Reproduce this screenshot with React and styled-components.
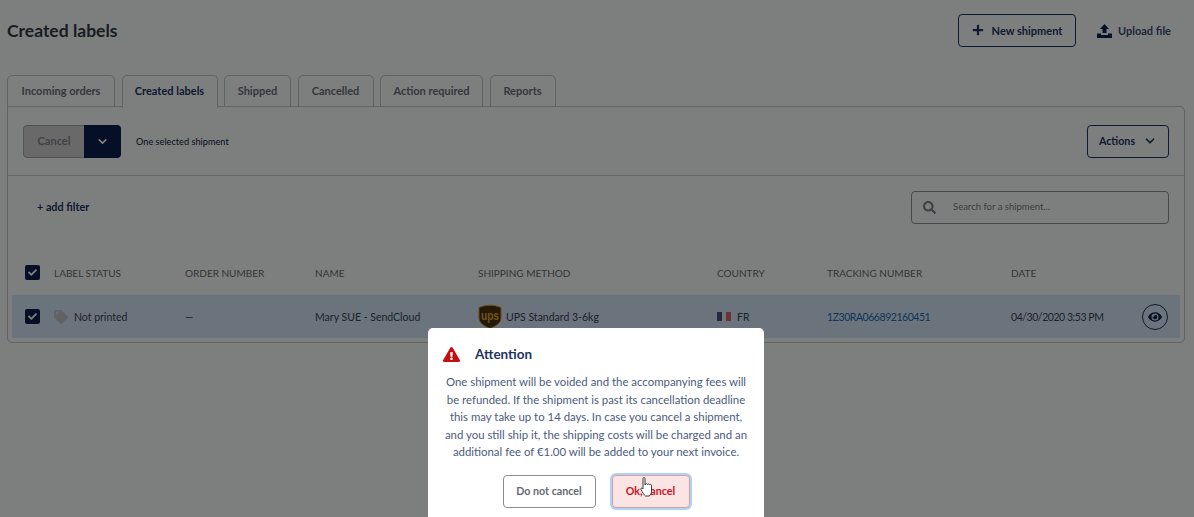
import React from "react";
import styled, { createGlobalStyle } from "styled-components";
import { FaPlus, FaTag, FaEye, FaSearch, FaExclamationTriangle, FaCheck } from "react-icons/fa";
import { ChevronDown } from "lucide-react";

const Global = createGlobalStyle`
  html, body { margin: 0; padding: 0; background: #fafeff; }
  body { font-family: "Lato", "Noto Sans", sans-serif; color: #1e2f55; }
  * { box-sizing: border-box; }
`;
const Page = styled.div`
  position: relative; width: 1194px; height: 517px; overflow: hidden;
  padding: 0 9px 0 7px;
`;
const Header = styled.header`
  display: flex; align-items: center; height: 61px; padding: 0 14px 0 0;
`;
const Title = styled.h1`
  margin: 0; flex: 1; font-size: 17.5px; font-weight: 700; color: #333a44;
`;
const OutlineButton = styled.button`
  display: inline-flex; align-items: center; justify-content: center; gap: ${p => p.$gap || 8}px;
  width: ${p => p.$w}px; height: ${p => p.$h || 33}px; border: 1.5px solid #1e3460; border-radius: 4px;
  background: transparent; color: #1e3460; font: 700 ${p => p.$size || 11}px "Lato", sans-serif; padding: 0 0 1px;
`;
const UploadButton = styled.div`
  display: flex; align-items: center; gap: 6px; margin-left: 21px; font-size: 11px; font-weight: 700; color: #3f4f72;
`;
const Tabs = styled.nav`
  display: flex; gap: 6.5px; height: 32px; margin-top: 14px; position: relative;
`;
const Tab = styled.div`
  width: ${p => p.$w}px; height: ${p => p.$active ? 33 : 32}px; display: flex; align-items: center; justify-content: center;
  padding-bottom: ${p => p.$active ? 3 : 1}px;
  border: 1px solid #c4c6c8; border-bottom: ${p => p.$active ? "none" : "1px solid #c4c6c8"};
  border-radius: 5px 5px 0 0; background: ${p => p.$active ? "#fafeff" : "transparent"};
  font-size: 11px; font-weight: 700; color: ${p => p.$active ? "#1e3460" : "#6a6f78"};
`;
const Panel = styled.section`
  width: 1178px; height: 237px; margin-top: -1px; border: 1px solid #c4c6c8; border-radius: 0 5px 5px 5px;
`;
const Toolbar = styled.div`
  height: 69px; display: flex; align-items: center; padding: 0 15px; border-bottom: 1px solid #c8cacc;
`;
const Split = styled.div`
  display: flex; width: 98px; height: 33px; border-radius: 4px; overflow: hidden;
`;
const SplitMain = styled.div`
  width: 61px; display: flex; align-items: center; justify-content: center; padding-bottom: 1px;
  background: #d2d3d4; border: 1.5px solid #a6a8aa; border-right: none; border-radius: 4px 0 0 4px;
  color: #80848a; font-size: 11px; font-weight: 700;
`;
const SplitArrow = styled.div`
  flex: 1; display: flex; align-items: center; justify-content: center; background: #0b1f4b; color: #fff;
`;
const Selected = styled.span`
  margin-left: 15px; flex: 1; font-size: 9.2px; color: #0c1a38;
`;
const FilterBar = styled.div`
  height: 60px; display: flex; align-items: center; justify-content: space-between; padding: 2px 15px 0 30px;
`;
const AddFilter = styled.span`
  font-size: 10.8px; font-weight: 700; color: #1e3460; margin: 0 0 2px -1px;
`;
const Search = styled.div`
  width: 258px; height: 33px; display: flex; align-items: center; gap: 17px; padding-left: 11px;
  border: 1px solid #8f9196; border-radius: 4px; color: #7d8086;
`;
const SearchText = styled.span`
  font-size: 9.5px; color: #7a7d82; margin-bottom: 1px;
`;
const Grid = styled.div`
  display: grid; grid-template-columns: 42px 131px 130px 163px 239px 110px 184px 131px 1fr;
  align-items: center; margin: 0 4px; height: ${p => p.$h}px; padding-top: ${p => p.$top || 0}px;
  background: ${p => p.$selected ? "#d6e8fa" : "transparent"};
`;
const HeadCell = styled.span`
  font-size: 10px; color: #6a6a6a;
`;
const Cell = styled.span`
  display: flex; align-items: center; font-size: 10.5px; color: ${p => p.$link ? "#2768b4" : "#3a4356"};
  letter-spacing: ${p => p.$tight ? "-.45px" : "0"};
`;
const Check = styled.span`
  justify-self: start; margin-left: 13px; width: 15px; height: 15px; border-radius: 2px; background: #0b1f4b; color: #fff;
  display: flex; align-items: center; justify-content: center;
`;
const TagWrap = styled.span`
  display: inline-flex; color: #c2c4c8; margin-right: 6px;
`;
const EyeButton = styled.span`
  width: 26px; height: 26px; border: 1.5px solid #1e3460; border-radius: 50%; display: flex; align-items: center; justify-content: center; color: #0f2550;
`;
const Overlay = styled.div`
  position: absolute; inset: 0; z-index: 2; background: rgba(0,0,0,.5);
`;
const Modal = styled.div`
  position: absolute; z-index: 3; left: 428px; top: 328px; width: 336px; height: 210px; background: #fff; border-radius: 5px; padding: 15px 15px 0;
`;
const ModalHead = styled.div`
  display: flex; align-items: center; gap: 15px; height: 22px; color: #c40f12;
`;
const ModalTitle = styled.h2`
  margin: 0; font-size: 13.5px; font-weight: 700; color: #1e3460;
`;
const ModalText = styled.p`
  margin: 8px 0 0; font-size: 11.4px; line-height: 17.5px; text-align: center; color: #4a5c80;
`;
const ModalButtons = styled.div`
  display: flex; justify-content: center; gap: 16px; margin-top: 14px;
`;
const Ghost = styled.button`
  width: 93px; height: 33px; background: #fff; border: 1px solid #8b8b8b; border-radius: 4px; color: #666a70; font: 700 10.7px "Lato", sans-serif; padding: 0 0 1px;
`;
const Danger = styled.button`
  width: 78px; height: 33px; background: #fbe4e4; border: 1px solid #e29b9d; border-radius: 4px; color: #c8141e; font: 700 10.7px "Lato", sans-serif; padding: 0 0 1px;
  box-shadow: 0 0 0 2px #a9d5f7;
`;
const Cursor = styled.svg`
  position: absolute; z-index: 4; left: 640px; top: 477px;
`;

const UpsLogo = () => (
  <svg width="24" height="25" viewBox="0 0 24 25" style={{ marginRight: 4 }}>
    <path d="M1 3.500C8 .5 16 .5 23 3.500V14c0 5-5 8-11 10.500C6 22 1 19 1 14Z" fill="#4a3414" stroke="#d49a28" strokeWidth="1" />
    <text x="12" y="15.500" textAnchor="middle" textLength="18" lengthAdjust="spacingAndGlyphs" fontFamily="Liberation Sans, sans-serif" fontWeight="700" fontSize="12" fill="#e6ab2c">ups</text>
  </svg>
);
const Flag = () => (
  <svg width="14" height="9" viewBox="0 0 14 9" style={{ marginRight: 6 }}>
    <rect width="5" height="9" fill="#46567f" /><rect x="5" width="4" height="9" fill="#e8e8ee" /><rect x="9" width="5" height="9" fill="#d6666a" />
  </svg>
);
const UploadIcon = () => (
  <svg width="15" height="14" viewBox="0 0 15 14">
    <path d="M7.500 0 12 5H9.500v4h-4V5H3Z" fill="#0f2550" />
    <path d="M0 9.500h4V11h7V9.500h4V14H0Z" fill="#0f2550" />
  </svg>
);
const Hand = () => (
  <Cursor width="13" height="20" viewBox="0 0 13 20">
    <path d="M3 1.500c0-1.300 2-1.300 2 0V8l.500-.500c.300-1 1.700-1 2 0 .300-.800 1.700-.800 2 .200.500-.500 1.800-.300 2 .600V14c0 2.500-1 4.500-2.500 5H5.500C4 18 2.500 15.500 1 12.500c-.500-1 .600-2 1.500-1L3 12Z" fill="#fff" stroke="#222" strokeWidth=".9" />
  </Cursor>
);

const tabs = [["Incoming orders", 108], ["Created labels", 96, true], ["Shipped", 67], ["Cancelled", 76], ["Action required", 103], ["Reports", 66]];
const heads = ["LABEL STATUS", "ORDER NUMBER", "NAME", "SHIPPING METHOD", "COUNTRY", "TRACKING NUMBER", "DATE"];

export default function App() {
  return (
    <Page>
      <Global />
      <Header>
        <Title>Created labels</Title>
        <OutlineButton $w={118}><FaPlus size={12} />New shipment</OutlineButton>
        <UploadButton><UploadIcon />Upload file</UploadButton>
      </Header>
      <Tabs>
        {tabs.map(([t, w, a]) => <Tab key={t} $w={w} $active={a}>{t}</Tab>)}
      </Tabs>
      <Panel>
        <Toolbar>
          <Split>
            <SplitMain>Cancel</SplitMain>
            <SplitArrow><ChevronDown size={13} strokeWidth={3} /></SplitArrow>
          </Split>
          <Selected>One selected shipment</Selected>
          <OutlineButton $w={82} $gap={8} $size={10.7}>Actions<ChevronDown size={14} strokeWidth={3} /></OutlineButton>
        </Toolbar>
        <FilterBar>
          <AddFilter>+ add filter</AddFilter>
          <Search><FaSearch size={13} /><SearchText>Search for a shipment...</SearchText></Search>
        </FilterBar>
        <Grid $h={59} $top={14}>
          <Check><FaCheck size={9} /></Check>
          {heads.map(h => <HeadCell key={h}>{h}</HeadCell>)}
          <span />
        </Grid>
        <Grid $h={43} $selected>
          <Check><FaCheck size={9} /></Check>
          <Cell><TagWrap><FaTag size={14} /></TagWrap>Not printed</Cell>
          <Cell>—</Cell>
          <Cell>Mary SUE - SendCloud</Cell>
          <Cell><UpsLogo />UPS Standard 3-6kg</Cell>
          <Cell><Flag />FR</Cell>
          <Cell $link $tight>1Z30RA066892160451</Cell>
          <Cell $tight>04/30/2020 3:53 PM</Cell>
          <EyeButton><FaEye size={14} /></EyeButton>
        </Grid>
      </Panel>
      <Overlay />
      <Modal>
        <ModalHead>
          <FaExclamationTriangle size={17} />
          <ModalTitle>Attention</ModalTitle>
        </ModalHead>
        <ModalText>
          One shipment will be voided and the accompanying fees will be refunded. If the shipment is past its cancellation deadline this may take up to 14 days. In case you cancel a shipment, and you still ship it, the shipping costs will be charged and an additional fee of €1.00 will be added to your next invoice.
        </ModalText>
        <ModalButtons>
          <Ghost>Do not cancel</Ghost>
          <Danger>Ok, cancel</Danger>
        </ModalButtons>
      </Modal>
      <Hand />
    </Page>
  );
}
